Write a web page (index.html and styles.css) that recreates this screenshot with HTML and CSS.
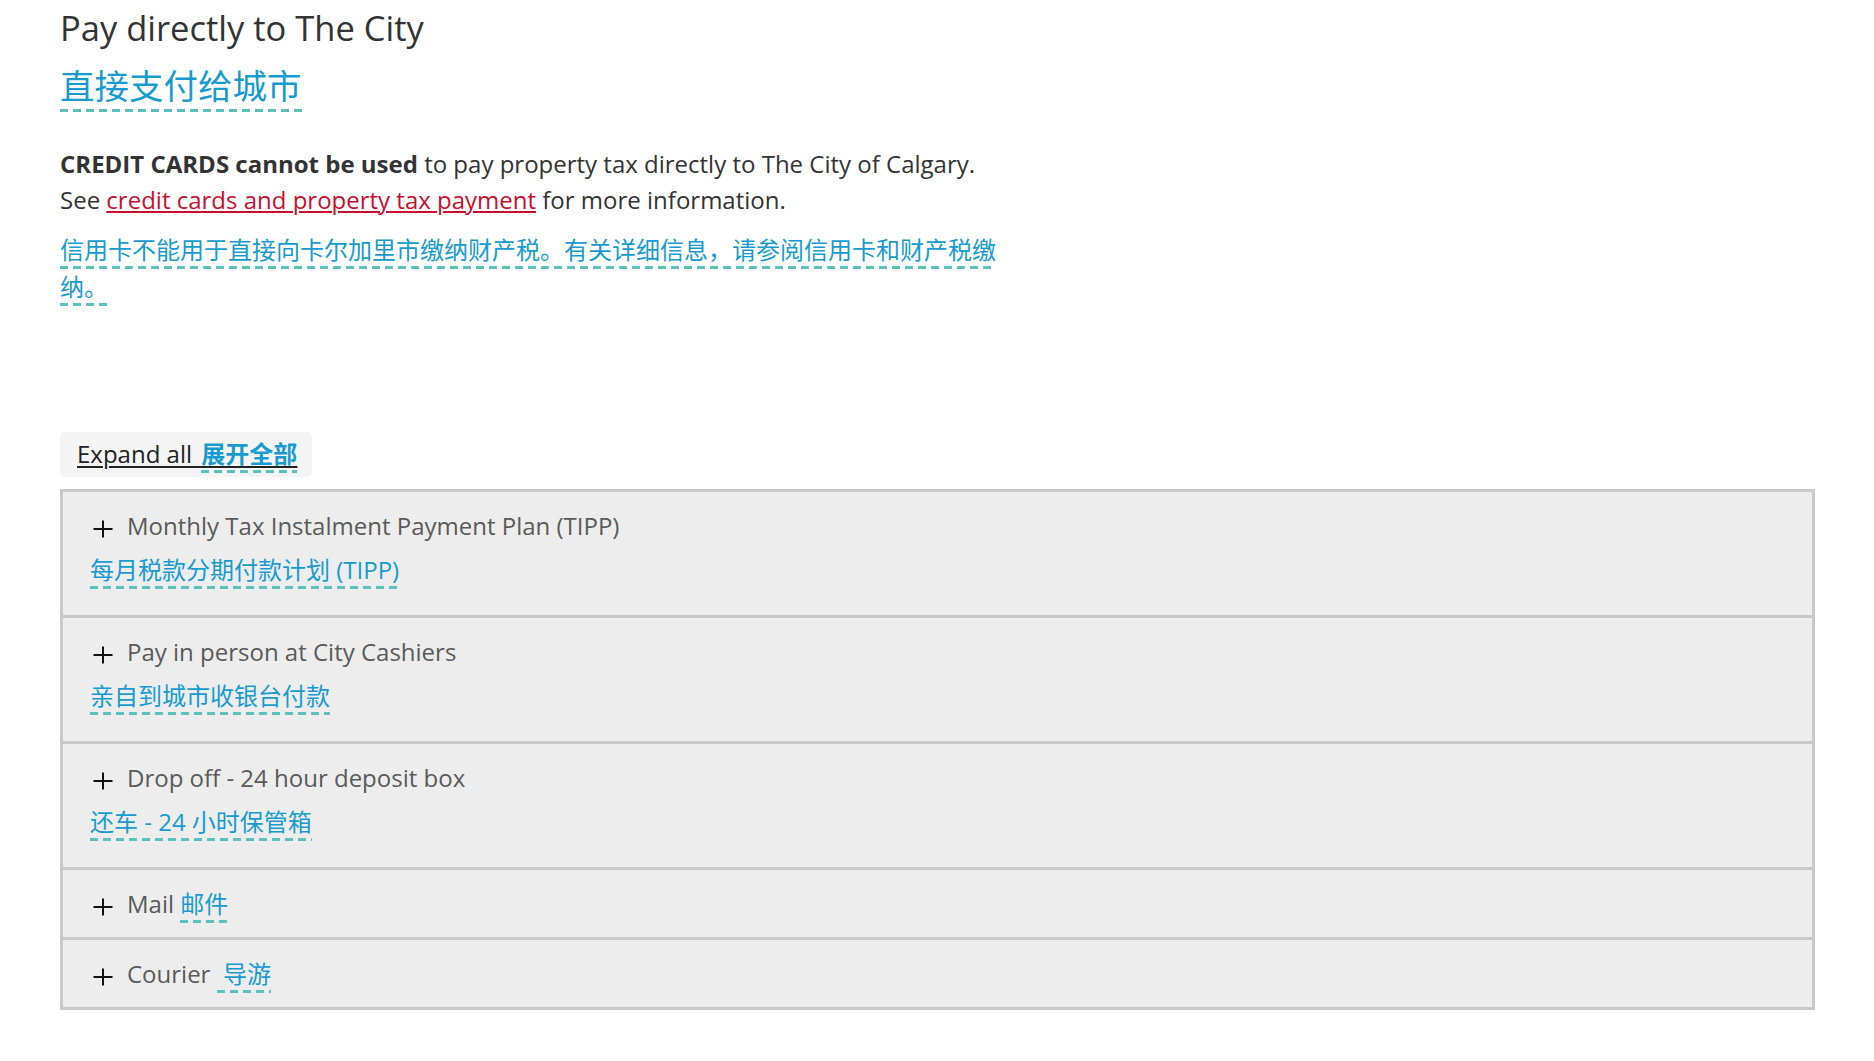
FILE: index.html
```html
<!DOCTYPE html>
<html lang="en">
<head>
<meta charset="utf-8">
<title>Pay directly to The City</title>
<link rel="stylesheet" href="styles.css">
</head>
<body>
<div class="page">
  <h2 class="title-en">Pay directly to The City</h2>
  <div class="title-zh"><span class="zh">直接支付给城市</span></div>

  <p class="para"><strong>CREDIT CARDS cannot be used</strong> to pay property tax directly to The City of Calgary.<br>See <a class="link" href="#">credit cards and property tax payment</a> for more information.</p>
  <p class="para-zh"><span class="zh">信用卡不能用于直接向卡尔加里市缴纳财产税。有关详细信息，请参阅信用卡和财产税缴纳。</span></p>

  <button class="expand" type="button"><span class="expand-text">Expand all<span class="wide-space"> </span><span class="zh zh-bold">展开全部</span></span></button>

  <div class="accordion">
    <div class="item">
      <div class="item-head"><svg class="plus" width="20" height="20" viewBox="0 0 20 20"><path d="M0.5 10H19.5M10 1.5V18.5"/></svg><span class="item-title">Monthly Tax Instalment Payment Plan (TIPP)</span></div>
      <div class="item-zh"><span class="zh">每月税款分期付款计划 (TIPP)</span></div>
    </div>
    <div class="item">
      <div class="item-head"><svg class="plus" width="20" height="20" viewBox="0 0 20 20"><path d="M0.5 10H19.5M10 1.5V18.5"/></svg><span class="item-title">Pay in person at City Cashiers</span></div>
      <div class="item-zh"><span class="zh">亲自到城市收银台付款</span></div>
    </div>
    <div class="item">
      <div class="item-head"><svg class="plus" width="20" height="20" viewBox="0 0 20 20"><path d="M0.5 10H19.5M10 1.5V18.5"/></svg><span class="item-title">Drop off - 24 hour deposit box</span></div>
      <div class="item-zh"><span class="zh">还车 - 24 小时保管箱</span></div>
    </div>
    <div class="item">
      <div class="item-head"><svg class="plus" width="20" height="20" viewBox="0 0 20 20"><path d="M0.5 10H19.5M10 1.5V18.5"/></svg><span class="item-title">Mail <span class="zh">邮件</span></span></div>
    </div>
    <div class="item">
      <div class="item-head"><svg class="plus" width="20" height="20" viewBox="0 0 20 20"><path d="M0.5 10H19.5M10 1.5V18.5"/></svg><span class="item-title">Courier&nbsp;<span class="zh">&nbsp;导游</span></span></div>
    </div>
  </div>
</div>
</body>
</html>
```

FILE: styles.css
```css
html, body {
  margin: 0;
  padding: 0;
  background: #ffffff;
}

body {
  font-family: "Open Sans", "Noto Sans CJK SC", sans-serif;
  color: #333333;
}

.page {
  padding: 4px 59px 40px 60px;
}

.zh {
  font-family: "Open Sans", "Noto Sans CJK SC", sans-serif;
  color: #179bcf;
  padding-bottom: 3px;
  background-image: linear-gradient(to right, #5bc0be 0, #5bc0be 8px, transparent 8px, transparent 13px);
  background-size: 13px 3px;
  background-repeat: repeat-x;
  background-position: 0 100%;
}

.title-en {
  margin: 0;
  font-size: 34.5px;
  line-height: 48px;
  font-weight: 400;
  color: #333333;
}

.title-zh {
  margin-top: 10px;
  font-size: 34.5px;
  line-height: 48px;
}

.para {
  margin: 36px 0 0 0;
  font-size: 24px;
  line-height: 36px;
  color: #333333;
}

.para strong {
  font-weight: 700;
}

.link {
  color: #c8102e;
  text-decoration: underline;
  text-decoration-thickness: 2px;
  text-underline-offset: 2px;
}

.para-zh {
  margin: 13px 0 0 0;
  max-width: 950px;
  font-size: 24px;
  line-height: 37px;
}

.expand {
  display: block;
  margin: 127px 0 0 0;
  padding: 4px 15px 5px 17px;
  border: none;
  border-radius: 5px;
  background: #f4f4f4;
  font-family: "Open Sans", "Noto Sans CJK SC", sans-serif;
  font-size: 24px;
  line-height: 36px;
  color: #222222;
  text-align: left;
  cursor: pointer;
}

.expand-text {
  text-decoration: underline;
  text-decoration-thickness: 2px;
  text-underline-offset: 3px;
  text-decoration-color: #222222;
}

.wide-space {
  word-spacing: 3px;
}

.zh-bold {
  font-weight: 700;
  text-decoration: underline;
  text-decoration-thickness: 2px;
  text-underline-offset: 3px;
  text-decoration-color: #222222;
}

.accordion {
  margin-top: 12px;
  border: 3px solid #c9c9c9;
  background: #ededed;
}

.item {
  padding: 16px 30px 15px 27px;
  border-bottom: 3px solid #c9c9c9;
}

.item:last-child {
  border-bottom: none;
}

.item-head {
  padding-left: 3px;
  font-size: 24px;
  line-height: 36px;
  color: #5a5a5a;
}

.plus {
  vertical-align: -4px;
  margin-right: 14px;
  fill: none;
  stroke: #111111;
  stroke-width: 2;
}

.item-zh {
  margin: 8px 0 12px 0;
  font-size: 24px;
  line-height: 36px;
}
```
